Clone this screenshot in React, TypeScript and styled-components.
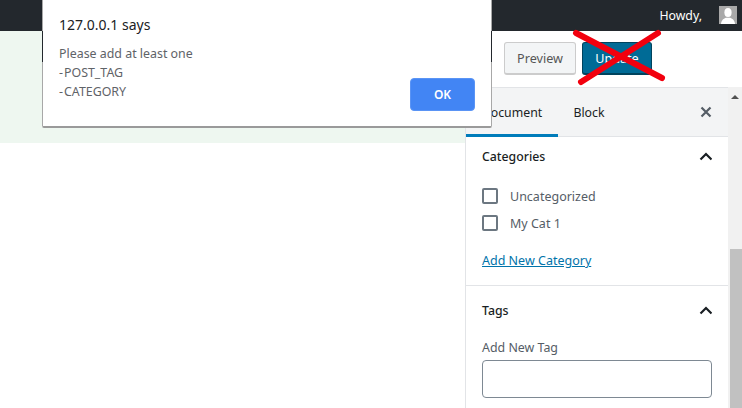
import React from 'react';
import styled, { createGlobalStyle } from 'styled-components';

const GlobalStyle = createGlobalStyle`
    html, body {
        margin: 0;
        padding: 0;
        height: 408px;
        overflow: hidden;
        background: #fff;
        font-family: "Noto Sans", "Open Sans", sans-serif;
        font-size: 13px;
    }
`;

const Page = styled.div`
    position: relative;
    width: 742px;
    height: 408px;
    overflow: hidden;
    display: flex;
    flex-direction: column;
`;

const AdminBar = styled.div`
    height: 31px;
    flex: none;
    background: #23282d;
    color: #fff;
    display: flex;
    align-items: center;
    justify-content: flex-end;
    gap: 17px;
    padding-right: 5px;
`;

const Howdy = styled.span`
    font-size: 12.3px;
    margin-top: -1px;
`;

const Avatar = styled.svg`
    width: 18px;
    height: 18px;
    display: block;
    margin-top: -1px;
`;

const Body = styled.div`
    flex: 1;
    min-height: 0;
    display: flex;
`;

const Content = styled.div`
    width: 465px;
    flex: none;
`;

const Notice = styled.div`
    height: 112px;
    background: #eef7f0;
`;

const Editor = styled.div`
    flex: 1;
    min-width: 0;
    display: flex;
    flex-direction: column;
`;

const Header = styled.div`
    height: 56px;
    flex: none;
    display: flex;
    align-items: flex-start;
    gap: 6px;
    padding: 11px 0 0 39px;
    box-sizing: border-box;
    background: #fff;
`;

const Button = styled.button<{ $primary?: boolean }>`
    height: 33px;
    width: ${({ $primary }) => ($primary ? '70px' : '72px')};
    padding: 0;
    box-sizing: border-box;
    border-radius: 3px;
    font-family: inherit;
    font-size: 12.6px;
    border: 1px solid ${({ $primary }) => ($primary ? '#00435d' : '#ccc')};
    border-bottom-width: 2px;
    background: ${({ $primary }) => ($primary ? '#006b96' : '#f3f5f6')};
    color: ${({ $primary }) => ($primary ? '#fff' : '#555')};
`;

const SidebarRow = styled.div`
    flex: 1;
    min-height: 0;
    display: flex;
`;

const Sidebar = styled.div`
    width: 263px;
    flex: none;
    box-sizing: border-box;
    background: #fff;
    border-left: 1px solid #e2e4e7;
    display: flex;
    flex-direction: column;
`;

const Tabs = styled.div`
    height: 50px;
    flex: none;
    box-sizing: border-box;
    background: #f3f4f5;
    border-top: 1px solid #e2e4e7;
    border-bottom: 1px solid #e2e4e7;
    display: flex;
    align-items: stretch;
    padding-right: 16px;
`;

const Tab = styled.div<{ $active?: boolean; $width: number }>`
    width: ${({ $width }) => $width}px;
    box-sizing: border-box;
    margin-bottom: -1px;
    display: flex;
    align-items: center;
    justify-content: center;
    font-size: 12.3px;
    color: #191e23;
    border-bottom: 3px solid ${({ $active }) => ($active ? '#007cba' : 'transparent')};
    padding-top: 2px;
`;

const CloseIcon = styled.svg`
    width: 12px;
    height: 12px;
    margin: 18px 0 0 auto;
    display: block;
`;

const Panel = styled.section<{ $border?: boolean }>`
    box-sizing: border-box;
    padding: 0 16px;
    border-bottom: ${({ $border }) => ($border ? '1px solid #e2e4e7' : 'none')};
`;

const PanelTitle = styled.div<{ $h: number; $mb: number }>`
    display: flex;
    align-items: center;
    justify-content: space-between;
    height: ${({ $h }) => $h}px;
    margin-bottom: ${({ $mb }) => $mb}px;
    font-size: 12.3px;
    font-weight: 500;
    color: #191e23;
`;

const Chevron = styled.svg`
    width: 14px;
    height: 9px;
    display: block;
`;

const CheckRow = styled.label`
    height: 26px;
    margin-bottom: 1px;
    display: flex;
    align-items: center;
    gap: 12px;
    font-size: 12.5px;
    color: #555d66;
`;

const Box = styled.span`
    width: 16px;
    height: 16px;
    box-sizing: border-box;
    flex: none;
    border: 2px solid #6c7781;
    border-radius: 2px;
    background: #fff;
`;

const AddLink = styled.a`
    display: block;
    margin-top: 16px;
    padding-bottom: 15px;
    font-size: 12.5px;
    line-height: 18px;
    color: #0073aa;
    text-decoration: underline;
`;

const FieldLabel = styled.div`
    font-size: 12.4px;
    line-height: 18px;
    color: #555d66;
    margin-bottom: 3px;
`;

const TagInput = styled.div`
    height: 38px;
    width: 230px;
    box-sizing: border-box;
    border: 1px solid #7e8993;
    border-radius: 4px;
    background: #fff;
`;

const Scrollbar = styled.div`
    flex: 1;
    min-width: 0;
    background: #f1f1f1;
    display: flex;
    flex-direction: column;
    align-items: center;
`;

const ArrowUp = styled.div`
    width: 0;
    height: 0;
    margin-top: 8px;
    border-left: 4px solid transparent;
    border-right: 4px solid transparent;
    border-bottom: 4px solid #505050;
`;

const Thumb = styled.div`
    width: 12px;
    height: 159px;
    margin: 150px 0 0 2px;
    background: #c1c1c1;
`;

const Dialog = styled.div`
    position: absolute;
    left: 42px;
    top: 0;
    width: 450px;
    height: 128px;
    box-sizing: border-box;
    background: #fff;
    border: 1px solid #a8a8a8;
    border-top: none;
    border-bottom: 2px solid #9a9a9a;
    border-radius: 0 0 2px 2px;
    padding: 15px 16px 0 16px;
    display: flex;
    flex-direction: column;

    &::before,
    &::after {
        content: '';
        position: absolute;
        top: 31px;
        height: 31px;
        width: 1px;
        background: #23282d;
    }
    &::before { left: -1px; }
    &::after { right: -1px; }
`;

const DialogTitle = styled.div`
    font-size: 14px;
    line-height: 20px;
    color: #202124;
`;

const DialogMessage = styled.div`
    margin-top: 9px;
    font-size: 12.4px;
    line-height: 19px;
    color: #5f6368;
    white-space: pre;
`;

const Dash = styled.span`
    padding-right: 1px;
`;

const DialogFooter = styled.div`
    position: absolute;
    right: 16px;
    bottom: 15px;
`;

const OkButton = styled.button`
    width: 65px;
    height: 33px;
    border: 1px solid #5a94f5;
    border-radius: 4px;
    background: #4285f4;
    color: #fff;
    font-family: inherit;
    font-size: 12px;
    font-weight: 600;
    padding: 0;
`;

const Cross = styled.svg`
    position: absolute;
    left: 570px;
    top: 28px;
    width: 100px;
    height: 60px;
`;

const ChevronUp = () => (
    <Chevron viewBox="0 0 14 9" fill="none">
        <path d="M2.5 7.5 8 2l5.5 5.5" stroke="#191e23" strokeWidth="2.2" />
    </Chevron>
);

export default function App() {
    return (
        <Page>
            <GlobalStyle />
            <AdminBar>
                <Howdy>Howdy,</Howdy>
                <Avatar viewBox="0 0 18 18">
                    <rect width="18" height="18" fill="#a9a9a9" />
                    <ellipse cx="9" cy="6.5" rx="3.6" ry="4.5" fill="#fff" />
                    <path d="M2 18c.3-4 3-5.500 5-6.200h4c2 .7 4.700 2.200 5 6.200z" fill="#fff" />
                </Avatar>
            </AdminBar>
            <Body>
                <Content>
                    <Notice />
                </Content>
                <Editor>
                    <Header>
                        <Button>Preview</Button>
                        <Button $primary>Update</Button>
                    </Header>
                    <SidebarRow>
                        <Sidebar>
                            <Tabs>
                                <Tab $active $width={92}>Document</Tab>
                                <Tab $width={62}>Block</Tab>
                                <CloseIcon viewBox="0 0 12 12" fill="none">
                                    <path d="M1.500 1.500l9 9M10.500 1.500l-9 9" stroke="#555d66" strokeWidth="2.200" />
                                </CloseIcon>
                            </Tabs>
                            <Panel $border>
                                <PanelTitle $h={38} $mb={8}>
                                    Categories
                                    <ChevronUp />
                                </PanelTitle>
                                <CheckRow><Box />Uncategorized</CheckRow>
                                <CheckRow><Box />My Cat 1</CheckRow>
                                <AddLink>Add New Category</AddLink>
                            </Panel>
                            <Panel>
                                <PanelTitle $h={48} $mb={5}>
                                    Tags
                                    <ChevronUp />
                                </PanelTitle>
                                <FieldLabel>Add New Tag</FieldLabel>
                                <TagInput />
                            </Panel>
                        </Sidebar>
                        <Scrollbar>
                            <ArrowUp />
                            <Thumb />
                        </Scrollbar>
                    </SidebarRow>
                </Editor>
            </Body>
            <Dialog>
                <DialogTitle>127.0.0.1 says</DialogTitle>
                <DialogMessage>
                    Please add at least one{'\n'}
                    <Dash>-</Dash>POST_TAG{'\n'}
                    <Dash>-</Dash>CATEGORY
                </DialogMessage>
                <DialogFooter>
                    <OkButton>OK</OkButton>
                </DialogFooter>
            </Dialog>
            <Cross viewBox="0 0 100 60" fill="none">
                <path d="M6 5 92 50M88 5 11 54" stroke="#f2000e" strokeWidth="6" strokeLinecap="round" />
            </Cross>
        </Page>
    );
}
